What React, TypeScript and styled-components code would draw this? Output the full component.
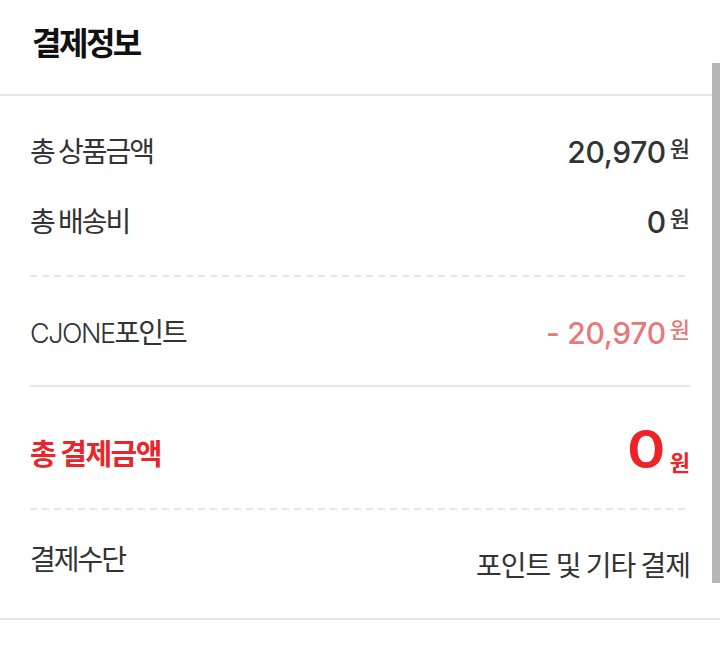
import React from "react";
import styled, { createGlobalStyle } from "styled-components";

const Global = createGlobalStyle`
  html, body { margin: 0; padding: 0; background: #fff; }
  body { font-family: "Noto Sans CJK KR", "Noto Sans", sans-serif; color: #333; }
`;

const Page = styled.div`
  position: relative;
  width: 720px;
  height: 659px;
  background: #fff;
  overflow: hidden;
`;

const Header = styled.header`
  height: 96px;
  display: flex;
  align-items: center;
  padding: 0 0 12px 32px;
  box-sizing: border-box;
  border-bottom: 2px solid #e6e6e6;
`;

const Title = styled.h2`
  margin: 0;
  font-family: "Noto Sans CJK KR", sans-serif;
  font-weight: 700;
  font-size: 32px;
  letter-spacing: -2.5px;
  color: #111;
`;

const Body = styled.div`
  padding: 0 30px;
  border-bottom: 2px solid #e6e6e6;
`;

const Section = styled.section<{ $pt: number; $pb: number }>`
  padding: ${(p) => p.$pt}px 0 ${(p) => p.$pb}px;
`;

const Row = styled.div`
  height: 70px;
  display: flex;
  align-items: center;
  justify-content: space-between;
`;

const Label = styled.span<{ $strong?: boolean }>`
  font-family: "Noto Sans CJK KR", sans-serif;
  font-size: ${(p) => (p.$strong ? 29 : 28)}px;
  font-weight: ${(p) => (p.$strong ? 700 : 400)};
  letter-spacing: ${(p) => (p.$strong ? -1.5 : -2)}px;
  color: ${(p) => (p.$strong ? "#e8262c" : "#333")};
  white-space: nowrap;
`;

const Latin = styled.span`
  font-family: "Inter", sans-serif;
  font-weight: 300;
  font-size: 27px;
  letter-spacing: -1.5px;
`;

const Value = styled.span<{ $tone?: "normal" | "minus" | "total" }>`
  white-space: nowrap;
  color: ${(p) =>
    p.$tone === "minus" ? "#e57a7c" : p.$tone === "total" ? "#ee2227" : "#333"};
`;

const Amount = styled.span<{ $big?: boolean }>`
  display: inline-block;
  font-family: "Inter", sans-serif;
  font-weight: ${(p) => (p.$big ? 600 : 500)};
  font-size: ${(p) => (p.$big ? 52 : 30)}px;
  letter-spacing: ${(p) => (p.$big ? 0 : -0.3)}px;
  transform-origin: right bottom;
  transform: ${(p) => (p.$big ? "translateY(-3px) scaleX(1.12)" : "none")};
`;

const Won = styled.span<{ $raise: number; $bold?: boolean }>`
  font-family: "Noto Sans CJK KR", sans-serif;
  font-size: 22px;
  font-weight: ${(p) => (p.$bold ? 700 : 500)};
  margin-left: 4px;
  vertical-align: ${(p) => p.$raise}px;
`;

const MethodText = styled.span`
  font-family: "Noto Sans CJK KR", sans-serif;
  font-size: 28px;
  letter-spacing: -1px;
  color: #333;
  margin-top: 12px;
  white-space: nowrap;
`;

const Dashed = styled.div`
  height: 2px;
  background: repeating-linear-gradient(
    to right,
    #e6e6e6 0 7px,
    transparent 7px 12px
  );
`;

const Solid = styled.div`
  height: 2px;
  background: #e6e6e6;
`;

const Scrollbar = styled.div`
  position: absolute;
  right: 0;
  top: 63px;
  width: 8px;
  height: 520px;
  background: #b6b6b6;
`;

export default function App() {
  return (
    <>
      <Global />
      <Page>
        <Header>
          <Title>결제정보</Title>
        </Header>
        <Body>
          <Section $pt={19} $pb={20}>
            <Row>
              <Label>총 상품금액</Label>
              <Value>
                <Amount>20,970</Amount>
                <Won $raise={6}>원</Won>
              </Value>
            </Row>
            <Row>
              <Label>총 배송비</Label>
              <Value>
                <Amount>0</Amount>
                <Won $raise={6}>원</Won>
              </Value>
            </Row>
          </Section>
          <Dashed />
          <Section $pt={19} $pb={19}>
            <Row>
              <Label>
                <Latin>CJONE</Latin>포인트
              </Label>
              <Value $tone="minus">
                <Amount>- 20,970</Amount>
                <Won $raise={6}>원</Won>
              </Value>
            </Row>
          </Section>
          <Solid />
          <Section $pt={30} $pb={21}>
            <Row>
              <Label $strong>총 결제금액</Label>
              <Value $tone="total">
                <Amount $big>0</Amount>
                <Won $raise={0} $bold>
                  원
                </Won>
              </Value>
            </Row>
          </Section>
          <Dashed />
          <Section $pt={13} $pb={25}>
            <Row>
              <Label>결제수단</Label>
              <MethodText>포인트 및 기타 결제</MethodText>
            </Row>
          </Section>
        </Body>
        <Scrollbar />
      </Page>
    </>
  );
}
